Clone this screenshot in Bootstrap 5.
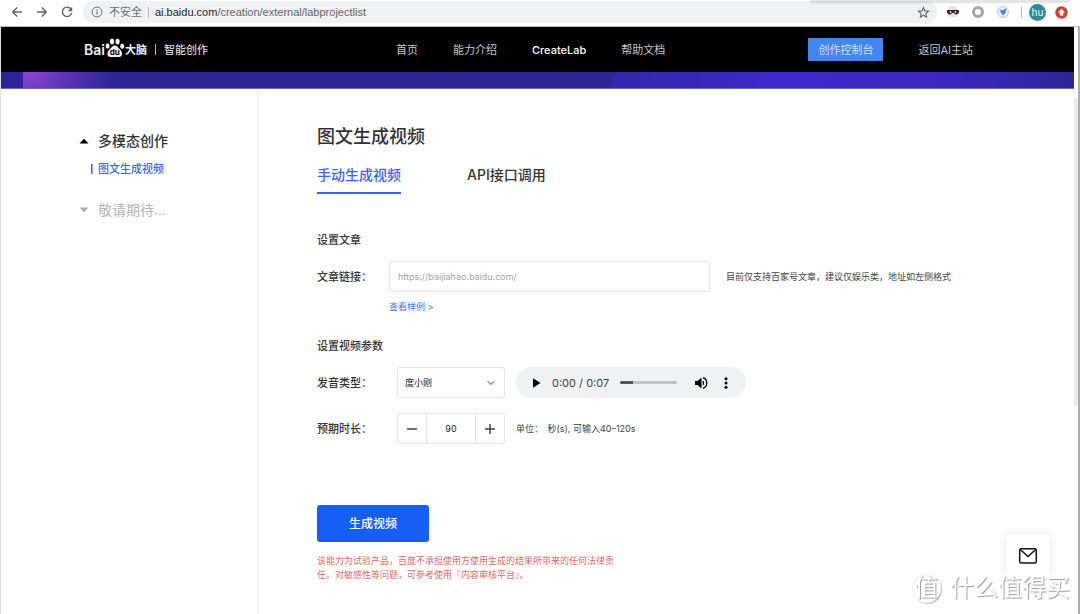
<!DOCTYPE html>
<html lang="zh-CN">
<head>
<meta charset="utf-8">
<meta name="viewport" content="width=device-width, initial-scale=1">
<title>图文生成视频</title>
<link href="https://cdn.jsdelivr.net/npm/bootstrap@5.3.0/dist/css/bootstrap.min.css" rel="stylesheet">
<style>
:root { --brand: #3a63f3; --ink: #333; --line: #e4e4e4; }
body { font-family: Inter, "Noto Sans CJK SC", sans-serif; font-size: 11px; line-height: 16px; color: var(--ink); background: #fff; }
a { text-decoration: none; }
svg { display: block; flex-shrink: 0; }

/* browser toolbar */
.toolbar { height: 27px; padding: 0 12px 2px 11px; border-bottom: 1px solid #b9b9b9; gap: 9px; }
.tool-btn { border: 0; padding: 0; background: none; color: #5f6368; }
.nav-tools { gap: 13px; margin-right: 1px; }
.address { height: 22px; border-radius: 11px; background: #f0f1f3; padding: 0 7px 0 8px; gap: 6px; color: #6b6f73; }
.address-url { font-family: "Liberation Sans", "Noto Sans CJK SC", sans-serif; color: #666; }
.address-url b { font-weight: 400; color: #222; }
.rule { width: 1px; height: 11px; background: #b5b8bb; }
.extensions { gap: 11px; }
.profile { gap: 9px; margin-left: -2px; }
.avatar { width: 17px; height: 17px; border-radius: 50%; background: #318a9b; color: #e6f4f6; font-size: 10px; }
.popup-edge { position: absolute; top: 0; right: 10px; width: 260px; height: 1px; background: #e6e6e6; box-shadow: 0 1px 3px #0006; }

/* site header */
.site-header { min-height: 45px; background: #000; padding-left: 83px; padding-right: 101px; }
.logo-area { flex: 0 0 312px; color: #f2f2f2; }
.logo-latin { font-size: 14px; font-weight: 600; }
.logo-cjk { font-weight: 700; }
.site-nav { gap: 35px; }
.site-header a { color: #c9c9c9; }
.site-header .current { color: #fff; font-weight: 500; }
.console-btn { height: 23px; padding: 0 10px; border: 0; border-radius: 0; background: #4684ee; color: #cfe0ff; font-size: 11px; line-height: 16px; }
.banner { height: 17px; border-bottom: 1px solid #6d67c0;
  background: linear-gradient(90deg, #2c2596 22px, transparent 22px),
    radial-gradient(circle at 30px 0, #8c45d4 0, #5a34b5 36px, transparent 84px),
    linear-gradient(115deg, #2c2596 0 57%, #3526a8 57%, #3f29cc 72%, #3c28c0 88%, #2f2596 100%); }

/* side menu */
.side-menu { flex: 0 0 258px; border-right: 2px solid #f3f3f3; padding: 42px 0 0 77px; }
.menu-head { font-size: 14px; line-height: 20px; gap: 8px; color: #333; font-weight: 500; }
.menu-head.soon { color: #b4b4b4; font-weight: 400; margin-top: 23px; }
.menu-sub { margin: 10px 0 0 13px; gap: 6px; line-height: 16px; font-weight: 500; color: #4263f4; }
.menu-sub::before { content: ""; width: 1px; height: 10px; background: #4263f4; box-shadow: 1px 0 #8fa3f8; }

/* form */
.workspace { padding: 36px 0 20px 58px; }
.workspace h1 { font-size: 18px; line-height: 24px; font-weight: 500; margin: 0 0 16px; color: #333; }
.mode-tabs { gap: 66px; font-size: 14px; line-height: 20px; margin-bottom: 38px; }
.mode-tabs button { border: 0; border-bottom: 2px solid transparent; background: none; padding: 0 0 7px; font-weight: 500; color: #333; }
.mode-tabs .active { color: var(--brand); border-color: var(--brand); }
.workspace h2 { font-size: 11px; line-height: 16px; font-weight: 500; margin: 0 0 13px; }
.field-label { flex: 0 0 80px; font-weight: 500; }
.field-label.narrow { flex-basis: 72px; }
.note { font-size: 9px; line-height: 14px; color: #444; }
.field-row { margin-bottom: 15px; }
.workspace .form-control, .workspace .form-select { height: 31px; border: 1px solid var(--line); border-radius: 3px; font-size: 9px; line-height: 14px; color: #222; }
.workspace .link-box { flex: 0 1 321px; padding: 0 8px; }
.link-box::placeholder { color: #a3a3a3; }
.sample-link { margin: 8px 0 0 72px; font-size: 9px; line-height: 14px; color: #3a7af5; }
.workspace .voice { width: 108px; padding: 0 20px 0 7px; background-size: 8px 8px; background-position: right 9px center; }
.player { width: 230px; height: 31px; border-radius: 16px; background: #f0f1f3; padding: 0 12px 0 14px; }
.player, .unit { margin-left: 11px; }
.player button { border: 0; padding: 0; background: none; color: #000; }
.player output { font-family: Inter, sans-serif; font-size: 11px; color: #444; margin: 0 11px 0 10px; }
.player input { appearance: none; width: 57px; height: 3px; border-radius: 2px; background: linear-gradient(90deg, #555 23%, #c3c3c3 23%); margin-right: 17px; }
.player input::-webkit-slider-thumb { appearance: none; width: 0; height: 0; }
.stepper { width: 108px; }
.stepper .btn { width: 30px; padding: 0; border: 1px solid var(--line); border-radius: 3px; color: #444; display: grid; place-items: center; }
.stepper .form-control { padding: 0; text-align: center; }
.submit-btn { width: 112px; height: 37px; margin-top: 61px; border: 0; border-radius: 3px; padding: 0; background: #155ff5; color: #fff; font-size: 12px; font-weight: 500; }
.legal { width: 304px; margin: 12px 0 0; font-size: 9px; line-height: 14px; color: #dc6a66; }

/* window edge */
.scroll-rail { flex: 0 0 6px; border-right: 2px solid #b0b0b0; padding-top: 71px; }
.scroll-rail div { height: 308px; background: #ececec; }

/* overlays */
.mail-btn { position: fixed; right: 30px; bottom: 36px; width: 44px; height: 44px; border: 0; border-radius: 3px; background: #fff; box-shadow: 0 0 10px #0000001a; display: grid; place-items: center; }
.stamp { position: fixed; right: 10px; bottom: 10px; gap: 9px; font-size: 24px; line-height: 32px; color: #fff; text-shadow: 1px 1px 1px #999; pointer-events: none; }
.stamp-seal { width: 29px; height: 29px; border-radius: 50%; box-shadow: 1px 1px 1px #bbb, inset 1px 1px 1px #eee; }
</style>
</head>
<body class="d-flex flex-column min-vh-100">
<div class="toolbar d-flex align-items-center position-relative">
  <div class="nav-tools d-flex">
    <button class="tool-btn" aria-label="后退"><svg width="12" height="12" viewBox="0 0 12 12" fill="none" stroke="currentColor" stroke-width="1.4"><path d="M11 6H2M6.2 1.5 1.7 6l4.5 4.5"/></svg></button>
    <button class="tool-btn" aria-label="前进"><svg width="12" height="12" viewBox="0 0 12 12" fill="none" stroke="currentColor" stroke-width="1.4"><path d="M1 6h9M5.8 1.5 10.3 6l-4.5 4.5"/></svg></button>
    <button class="tool-btn" aria-label="刷新"><svg width="12" height="12" viewBox="0 0 12 12" fill="none" stroke="currentColor" stroke-width="1.4"><path d="M10.2 3.5A4.7 4.7 0 1 0 10.7 7"/><path d="M11.2.8v4.4H6.8z" fill="currentColor" stroke="none"/></svg></button>
  </div>
  <div class="address d-flex align-items-center flex-grow-1">
    <svg width="12" height="12" viewBox="0 0 12 12" fill="none" stroke="currentColor"><circle cx="6" cy="6" r="4.9"/><path d="M6 5.3v3.3M6 3.2v1.2" stroke-width="1.2"/></svg>
    <span>不安全</span>
    <span class="rule"></span>
    <span class="address-url"><b>ai.baidu.com</b>/creation/external/labprojectlist</span>
    <button class="tool-btn ms-auto" aria-label="收藏"><svg width="13" height="13" viewBox="0 0 13 13" fill="none" stroke="currentColor" stroke-width="1.1"><path d="m6.500 1.600 1.400 3.300 3.600.3-2.700 2.400.8 3.500-3.100-1.900-3.100 1.900.8-3.500-2.700-2.400 3.600-.3z"/></svg></button>
  </div>
  <div class="extensions d-flex align-items-center">
    <svg width="14" height="14" viewBox="0 0 14 14"><path d="M3 1h6l2 2v9H3z" fill="#e4e4e4"/><path d="M1.500 5h11c1 0 .8 4.500-2 4.500-2 0-2.300-1.700-3.500-1.700S5.500 9.500 3.500 9.500C.7 9.500.5 5 1.500 5z" fill="#3b1c1c"/><circle cx="4.500" cy="7" r="1" fill="#ddd"/><circle cx="9.500" cy="7" r="1" fill="#ddd"/></svg>
    <svg width="14" height="14" viewBox="0 0 14 14"><circle cx="7" cy="7" r="4.500" fill="#fff" stroke="#a4a4a4" stroke-width="3"/></svg>
    <svg width="14" height="14" viewBox="0 0 14 14"><circle cx="7" cy="7" r="5.500" fill="#e6f2fd" stroke="#b5c8f8"/><path d="M3.300 4.300c1.500 1 2.600 1.300 4 .9L10.500 3l-.6 2.500c-.2 3-1.700 4.700-4.200 4.700l.7-1.600-2.200-.8.8-.6z" fill="#4a78ee"/></svg>
    <span class="rule"></span>
  </div>
  <div class="profile d-flex align-items-center">
    <span class="avatar d-flex align-items-center justify-content-center">hu</span>
    <svg width="13" height="13" viewBox="0 0 13 13"><circle cx="6.500" cy="6.500" r="6.200" fill="#cf3e2f"/><path d="m6.500 2.700 3.600 3.700H8.300v3H4.700v-3H2.900z" fill="#fff"/></svg>
  </div>
  <div class="popup-edge"></div>
</div>

<div class="d-flex flex-grow-1 border-start">
  <div class="flex-grow-1 d-flex flex-column">
    <header class="site-header d-flex align-items-center">
      <div class="logo-area d-flex align-items-center">
        <span class="logo-latin">Bai</span>
        <svg class="mb-1" width="20" height="20" viewBox="0 0 20 20" fill="#f2f2f2"><ellipse cx="2.600" cy="8" rx="2" ry="2.700"/><ellipse cx="7" cy="3.500" rx="2.100" ry="2.900"/><ellipse cx="12.600" cy="3.600" rx="2.100" ry="2.900"/><ellipse cx="17.200" cy="8.300" rx="2" ry="2.700"/><path d="M9.800 7.500c2.300 0 3.300 2.200 5 3.700 3 2.600 3.200 7.800-.8 7.800H5.500c-4 0-3.800-5.200-.8-7.800 1.800-1.500 2.800-3.700 5.100-3.700z"/><text x="9.800" y="17" text-anchor="middle" font-size="8" font-weight="700" fill="#000">du</text></svg>
        <span class="logo-cjk">大脑</span>
        <span class="rule mx-2"></span>
        <span>智能创作</span>
      </div>
      <nav class="site-nav d-flex">
        <a href="#">首页</a><a href="#">能力介绍</a><a href="#" class="current">CreateLab</a><a href="#">帮助文档</a>
      </nav>
      <div class="site-nav d-flex align-items-center ms-auto">
        <button class="console-btn">创作控制台</button>
        <a href="#">返回AI主站</a>
      </div>
    </header>
    <div class="banner"></div>
    <div class="d-flex flex-grow-1">
      <aside class="side-menu">
        <div class="menu-head d-flex align-items-center"><svg width="12" height="6" viewBox="0 0 12 6"><path d="M1.500 5.500 6 .8l4.500 4.700z" fill="#000"/></svg>多模态创作</div>
        <a href="#" class="menu-sub d-flex align-items-center">图文生成视频</a>
        <div class="menu-head soon d-flex align-items-center"><svg width="12" height="6" viewBox="0 0 12 6"><path d="M1.500.5 6 5.200 10.500.5z" fill="#aaa"/></svg>敬请期待...</div>
      </aside>
      <main class="workspace flex-grow-1">
        <h1>图文生成视频</h1>
        <div class="mode-tabs d-flex"><button class="active">手动生成视频</button><button>API接口调用</button></div>

        <section>
          <h2>设置文章</h2>
          <div class="d-flex align-items-center">
            <label class="field-label narrow" for="article">文章链接：</label>
            <input id="article" type="url" class="form-control link-box" placeholder="https://baijiahao.baidu.com/">
            <span class="note ms-3">目前仅支持百家号文章，建议仅娱乐类，地址如左侧格式</span>
          </div>
          <a href="#" class="sample-link d-block">查看样例 &gt;</a>
        </section>

        <section class="mt-4">
          <h2>设置视频参数</h2>
          <div class="field-row d-flex align-items-center">
            <label class="field-label" for="voice">发音类型：</label>
            <select id="voice" class="form-select voice"><option>度小刚</option></select>
            <div class="player d-flex align-items-center">
              <button aria-label="播放"><svg width="12" height="12" viewBox="0 0 12 12"><path d="M3 1.200 10.500 6 3 10.800z"/></svg></button>
              <output>0:00 / 0:07</output>
              <input type="range" min="0" max="7" value="0" aria-label="播放进度">
              <button aria-label="音量"><svg width="14" height="14" viewBox="0 0 14 14"><path d="M1 5v4h2.500L7.500 12.500v-11L3.500 5z"/><path d="M8.700 4.300c2 1.200 2 4.200 0 5.400z"/><path d="M9 1.700c5 1.500 5 9.100 0 10.600" fill="none" stroke="#000" stroke-width="1.300"/></svg></button>
              <button class="ms-auto" aria-label="更多"><svg width="16" height="14" viewBox="0 0 16 14"><circle cx="8" cy="2.700" r="1.500"/><circle cx="8" cy="7" r="1.500"/><circle cx="8" cy="11.300" r="1.500"/></svg></button>
            </div>
          </div>
          <div class="d-flex align-items-center">
            <label class="field-label" for="seconds">预期时长：</label>
            <div class="stepper input-group flex-nowrap">
              <button class="btn" aria-label="减少"><svg width="12" height="12" viewBox="0 0 12 12"><path d="M1 6h10" stroke="#444" stroke-width="1.500"/></svg></button>
              <input id="seconds" type="text" inputmode="numeric" class="form-control" value="90">
              <button class="btn" aria-label="增加"><svg width="12" height="12" viewBox="0 0 12 12"><path d="M1 6h10M6 1v10" stroke="#444" stroke-width="1.500"/></svg></button>
            </div>
            <span class="note unit">单位：&ensp;秒(s), 可输入40–120s</span>
          </div>
        </section>

        <button class="submit-btn">生成视频</button>
        <p class="legal">该能力为试验产品，百度不承担使用方使用生成的结果所带来的任何法律责任。对敏感性等问题，可参考使用『内容审核平台』。</p>
      </main>
    </div>
  </div>
  <div class="scroll-rail"><div></div></div>
</div>

<button class="mail-btn" aria-label="邮件"><svg width="20" height="18" viewBox="0 0 20 18" fill="none" stroke="#111" stroke-width="1.500"><rect x="1.700" y="1.700" width="16.600" height="14.300" rx="1.500"/><path d="m2.300 2.500 7.700 7 7.700-7"/></svg></button>
<div class="stamp d-flex align-items-center"><span class="stamp-seal d-flex align-items-center justify-content-center">值</span><span>什么值得买</span></div>
<script src="https://cdn.jsdelivr.net/npm/bootstrap@5.3.0/dist/js/bootstrap.bundle.min.js"></script>
</body>
</html>
